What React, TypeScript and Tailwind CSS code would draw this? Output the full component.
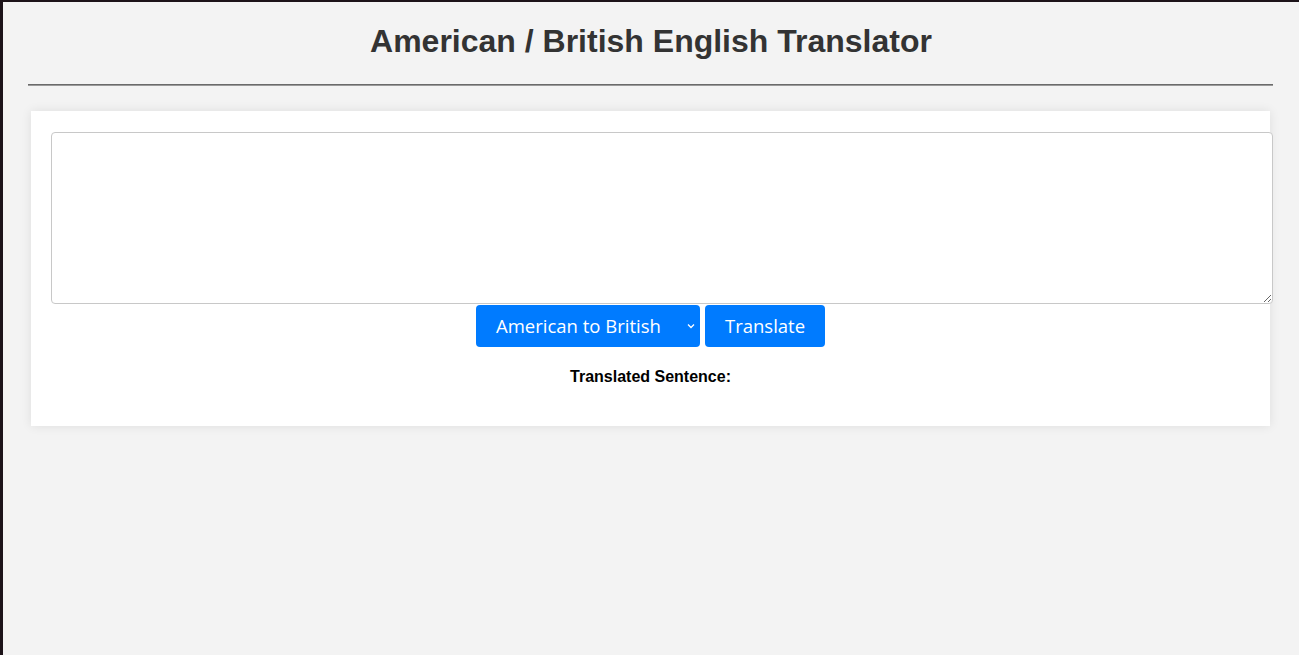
import React from "react";

export default function App() {
  return (
    <div className="min-h-[655px] bg-[#f3f3f3] border-t-2 border-l-[3px] border-[#1c1319] font-['Liberation_Sans',Arial,sans-serif]">
      <h1 className="pt-[21px] text-center text-[32px] leading-[37px] font-bold text-[#333333]">
        American / British English Translator
      </h1>
      <div className="mt-[24px] ml-[25px] mr-[26px] h-[2px] border-t border-[#6a6a6a] bg-[#7a7a7a] border-b border-b-[#9a9a9a]" />
      <div className="mt-[25px] ml-[28px] mr-[29px] bg-white shadow-[0_0_10px_rgba(0,0,0,0.09)] pt-[21px] pl-[20px] pb-[40px]">
        <textarea
          className="block w-[1222px] h-[172px] rounded-[4px] border border-[#c8c8c8] bg-white resize"
          aria-label="text"
        />
        <div className="mt-[1px] flex justify-center gap-[5px] pr-[20px] font-['Open_Sans','Noto_Sans',sans-serif] text-[18.5px] text-white">
          <div className="relative flex h-[42px] w-[224px] items-center rounded-[4px] bg-[#007bff] pl-[20px]">
            <span>American to British</span>
            <svg
              className="absolute right-[5px] top-[18px]"
              width="8"
              height="6"
              viewBox="0 0 8 6"
              fill="none"
            >
              <path d="M1 1.5 L4 4.5 L7 1.5" stroke="white" strokeWidth="1.3" />
            </svg>
          </div>
          <div className="flex h-[42px] w-[120px] items-center justify-center rounded-[4px] bg-[#007bff]">
            <span>Translate</span>
          </div>
        </div>
        <p className="mt-[21px] pr-[20px] text-center text-[16px] font-bold leading-[18px] text-black">
          Translated Sentence:
        </p>
      </div>
    </div>
  );
}
